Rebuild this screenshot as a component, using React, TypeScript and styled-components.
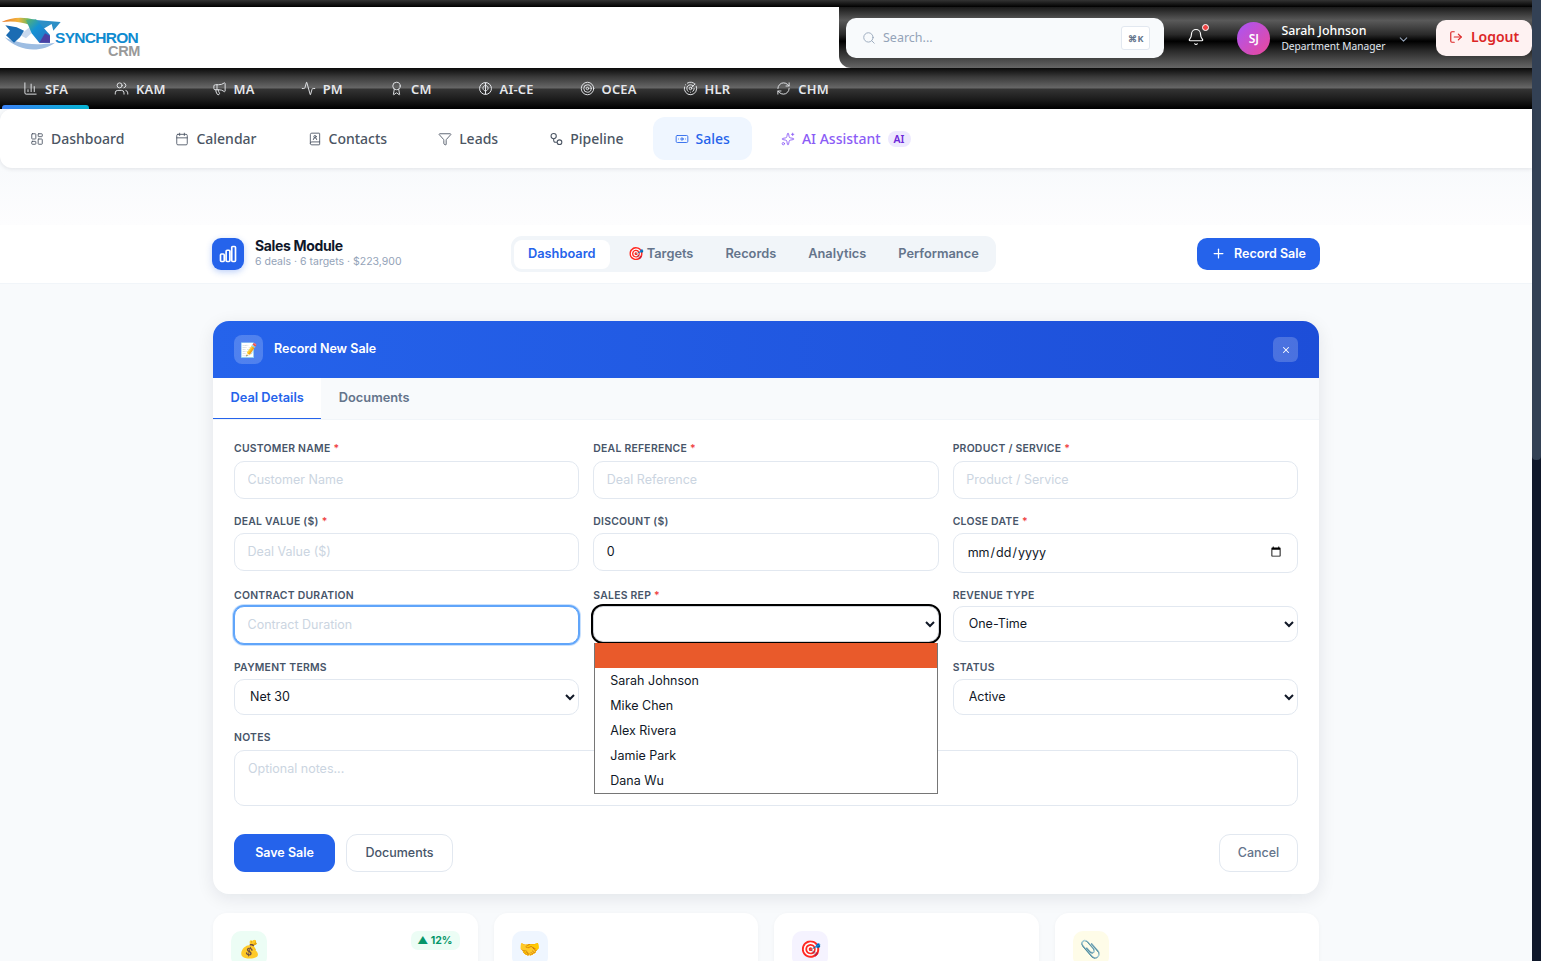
import { FC, ReactNode } from "react";
import styled, { createGlobalStyle } from "styled-components";
import {
  BarChart3,
  Users,
  Megaphone,
  Activity,
  Award,
  Target,
  Radar,
  RefreshCw,
  LayoutDashboard,
  Calendar,
  BookUser,
  Filter,
  Banknote,
  Sparkles,
  Search,
  Bell,
  ChevronDown,
  LogOut,
  Plus,
  X,
} from "lucide-react";

const GlobalStyle = createGlobalStyle`
  html, body {
    margin: 0;
    padding: 0;
    height: 100%;
    overflow: hidden;
    background: #f8fafc;
  }
  * { box-sizing: border-box; }
`;

const DARK_BAND =
  "linear-gradient(180deg, #0a0a0a 0%, #3a3a3a 22%, #666 48%, #333 52%, #1a1a1a 78%, #000 100%)";
const PANEL_BAND =
  "linear-gradient(180deg, #1a1a1a 0%, #5a5a5a 22%, #2a2a2a 45%, #000 56%, #2a2a2a 72%, #666 100%)";
const BODY_FONT = `Inter, "Liberation Sans", sans-serif`;
const NAV_FONT = `"Noto Sans", "Open Sans", sans-serif`;

const Shell = styled.div`
  display: flex;
  height: 961px;
  overflow: hidden;
`;

const Page = styled.div`
  width: 1532px;
  flex-shrink: 0;
  display: flex;
  flex-direction: column;
  font-family: ${BODY_FONT};
  & > * {
    flex-shrink: 0;
  }
`;

const ScrollTrack = styled.div`
  flex: 1;
  background: #0f172a;
`;

const ScrollThumb = styled.div`
  height: 460px;
  background: #334155;
  border-radius: 0 0 4px 4px;
`;

const TopStrip = styled.div`
  height: 7px;
  background: linear-gradient(180deg, #333 0%, #000 100%);
`;

const Header = styled.header`
  height: 61px;
  display: flex;
  justify-content: space-between;
  background: #fff;
`;

const Brand = styled.div`
  display: flex;
  position: relative;
  width: 160px;
  height: 61px;
`;

const Emblem = styled.svg`
  position: absolute;
  left: 0;
  top: 8px;
`;

const BrandName = styled.span`
  position: absolute;
  left: 55px;
  top: 22px;
  font-family: "Liberation Sans", sans-serif;
  font-weight: 700;
  font-size: 15.5px;
  line-height: 17px;
  letter-spacing: -0.7px;
  color: #0f8bd0;
`;

const BrandSub = styled.span`
  position: absolute;
  left: 108px;
  top: 37px;
  font-family: "Liberation Sans", sans-serif;
  font-weight: 700;
  font-size: 14.5px;
  line-height: 15px;
  letter-spacing: -0.3px;
  color: #999;
`;

const HeaderTools = styled.div`
  width: 693px;
  padding: 11px 0 0 7px;
  display: flex;
  align-items: flex-start;
  border-bottom-left-radius: 12px;
  background: ${PANEL_BAND};
  font-family: ${NAV_FONT};
`;

const SearchBox = styled.div`
  width: 319px;
  height: 40px;
  display: flex;
  align-items: center;
  gap: 7px;
  padding: 0 14px 0 16px;
  border-radius: 10px;
  background: #f8fafc;
  color: #94a3b8;
  font-size: 12.5px;
`;

const SearchHint = styled.span`
  flex: 1;
  margin-bottom: 1px;
`;

const Kbd = styled.span`
  width: 29px;
  height: 24px;
  display: flex;
  align-items: center;
  justify-content: center;
  border: 1px solid #e2e8f0;
  border-radius: 3px;
  background: #fff;
  color: #64748b;
  font-size: 9px;
  font-weight: 700;
`;

const BellWrap = styled.div`
  position: relative;
  margin: 10px 0 0 23px;
  width: 18px;
  height: 20px;
  color: #fff;
`;

const BellDot = styled.span`
  position: absolute;
  top: -4px;
  right: -4px;
  width: 7px;
  height: 7px;
  border-radius: 50%;
  background: #ef4444;
  border: 1px solid #fff;
`;

const Avatar = styled.div`
  margin: 4px 0 0 32px;
  width: 33px;
  height: 33px;
  border-radius: 50%;
  display: flex;
  align-items: center;
  justify-content: center;
  background: linear-gradient(135deg, #a855f7, #ec4899);
  color: #fff;
  font-size: 12px;
  font-weight: 600;
`;

const UserInfo = styled.div`
  margin: 4px 0 0 11px;
  width: 105px;
  color: #fff;
`;

const UserName = styled.div`
  font-size: 12.4px;
  font-weight: 500;
  line-height: 17px;
`;

const UserRole = styled.div`
  font-size: 10.2px;
  line-height: 15px;
  white-space: nowrap;
  color: #e2e8f0;
`;

const UserCaret = styled.div`
  margin: 11px 0 0 11px;
  color: #94a3b8;
`;

const LogoutButton = styled.button`
  margin: 2px 0 0 26px;
  width: 96px;
  height: 36px;
  padding: 0 0 3px;
  display: flex;
  align-items: center;
  justify-content: center;
  gap: 8px;
  border: none;
  border-radius: 10px;
  background: #fef2f2;
  color: #dc2626;
  font-family: ${NAV_FONT};
  font-size: 14px;
  font-weight: 600;
`;

const ModuleBar = styled.nav`
  height: 41px;
  display: flex;
  gap: 4px;
  padding-left: 2px;
  background: ${DARK_BAND};
  font-family: ${NAV_FONT};
`;

const ModuleTab = styled.div<{ $active?: boolean }>`
  position: relative;
  padding: 0 21px;
  display: flex;
  align-items: center;
  gap: 7px;
  color: #e5e7eb;
  font-size: 12.9px;
  font-weight: 600;
  letter-spacing: 0.2px;
  &::after {
    content: "";
    display: ${(p) => (p.$active ? "block" : "none")};
    position: absolute;
    left: 0;
    right: 0;
    bottom: 0;
    height: 4px;
    border-radius: 3px 3px 0 0;
    background: linear-gradient(90deg, #3b82f6, #06b6d4);
  }
`;

const SubNav = styled.nav`
  position: relative;
  z-index: 1;
  height: 59px;
  display: flex;
  align-items: center;
  gap: 7px;
  padding-left: 8px;
  border-radius: 12px 0 0 12px;
  background: #fff;
  box-shadow: 0 1px 4px rgba(15, 23, 42, 0.1);
  font-family: ${NAV_FONT};
`;

const SubTab = styled.div<{ $active?: boolean; $ai?: boolean }>`
  height: 43px;
  padding: 0 22px;
  display: flex;
  align-items: center;
  gap: 7px;
  border-radius: 12px;
  background: ${(p) => (p.$active ? "#eff6ff" : "transparent")};
  color: ${(p) => (p.$active ? "#2563eb" : p.$ai ? "#8b5cf6" : "#4b5563")};
  font-size: 14px;
  font-weight: 500;
`;

const AiBadge = styled.span`
  padding: 1px 6px;
  border-radius: 8px;
  background: #ede9fe;
  color: #6d28d9;
  font-size: 10.5px;
  font-weight: 600;
`;

const Spacer = styled.div`
  height: 57px;
  background: linear-gradient(180deg, #f8fafc, #fdfdfe);
`;

const ModuleHeader = styled.div`
  height: 59px;
  display: grid;
  grid-template-columns: 299px auto 1fr;
  align-items: center;
  padding: 0 212px;
  background: #fff;
  border-bottom: 1px solid #f1f5f9;
`;

const ModuleTitleGroup = styled.div`
  display: flex;
  align-items: center;
  gap: 11px;
`;

const ModuleIcon = styled.div`
  width: 32px;
  height: 32px;
  display: flex;
  align-items: center;
  justify-content: center;
  border-radius: 9px;
  background: #2563eb;
  color: #fff;
  box-shadow: 0 2px 6px rgba(37, 99, 235, 0.3);
`;

const ModuleTitle = styled.div`
  font-size: 14px;
  font-weight: 700;
  line-height: 13px;
  margin-bottom: 3px;
  letter-spacing: -0.35px;
  color: #0f172a;
`;

const ModuleMeta = styled.div`
  font-size: 10.5px;
  line-height: 14px;
  color: #94a3b8;
`;

const PillGroup = styled.div`
  height: 36px;
  display: flex;
  align-items: center;
  gap: 4px;
  padding: 0 3px;
  border-radius: 11px;
  background: #f1f5f9;
`;

const Pill = styled.div<{ $active?: boolean }>`
  height: 29px;
  padding: 0 14px 1px;
  display: flex;
  align-items: center;
  border-radius: 8px;
  background: ${(p) => (p.$active ? "#fff" : "transparent")};
  color: ${(p) => (p.$active ? "#2563eb" : "#64748b")};
  font-size: 12.8px;
  font-weight: 600;
  white-space: nowrap;
`;

const RecordButton = styled.button`
  justify-self: end;
  width: 123px;
  height: 32px;
  padding: 0 0 1px;
  display: flex;
  align-items: center;
  justify-content: center;
  gap: 8px;
  border: none;
  border-radius: 10px;
  background: #2563eb;
  color: #fff;
  font-family: ${BODY_FONT};
  font-size: 12.5px;
  font-weight: 600;
`;

const Main = styled.main`
  padding: 37px 213px 0;
`;

const FormCard = styled.section`
  border-radius: 16px;
  background: #fff;
  box-shadow: 0 4px 18px rgba(15, 23, 42, 0.09);
`;

const FormHeader = styled.div`
  height: 57px;
  display: flex;
  align-items: center;
  gap: 11px;
  padding: 0 21px;
  border-radius: 16px 16px 0 0;
  background: linear-gradient(90deg, #2563eb, #1d4ed8);
  color: #fff;
`;

const HeaderEmoji = styled.div`
  width: 29px;
  height: 29px;
  display: flex;
  align-items: center;
  justify-content: center;
  border-radius: 8px;
  background: rgba(255, 255, 255, 0.2);
  font-size: 14px;
`;

const FormTitle = styled.div`
  flex: 1;
  margin-bottom: 2px;
  font-size: 12.5px;
  font-weight: 600;
`;

const CloseButton = styled.div`
  width: 25px;
  height: 25px;
  display: flex;
  align-items: center;
  justify-content: center;
  border-radius: 6px;
  background: rgba(255, 255, 255, 0.2);
`;

const TabRow = styled.div`
  height: 42px;
  display: flex;
  background: #f8fafc;
  border-bottom: 1px solid #f1f5f9;
`;

const FormTab = styled.div<{ $active?: boolean }>`
  padding: 0 17.5px 2px;
  display: flex;
  align-items: center;
  background: ${(p) => (p.$active ? "#fff" : "transparent")};
  border-bottom: 1.5px solid ${(p) => (p.$active ? "#2563eb" : "transparent")};
  color: ${(p) => (p.$active ? "#2563eb" : "#64748b")};
  font-size: 12.8px;
  font-weight: 600;
`;

const FormBody = styled.div`
  position: relative;
  padding: 21px 21px 22px;
`;

const FieldGrid = styled.div`
  display: grid;
  grid-template-columns: repeat(3, 1fr);
  grid-template-rows: 72px 73px 73px 71px auto;
  column-gap: 14px;
`;

const Field = styled.div<{ $full?: boolean }>`
  position: relative;
  grid-column: ${(p) => (p.$full ? "1 / -1" : "auto")};
`;

const Label = styled.label<{ $drop?: number }>`
  display: block;
  height: 14px;
  margin-bottom: 6px;
  padding-top: ${(p) => p.$drop ?? 0}px;
  font-size: 10.4px;
  line-height: 15px;
  font-weight: 600;
  letter-spacing: 0.25px;
  color: #475569;
`;

const Req = styled.span`
  margin-left: 3px;
  color: #ef4444;
`;

const controlStyle = `
  display: block;
  width: 100%;
  border: 1px solid #e2e8f0;
  border-radius: 10px;
  background: #fff;
  color: #111827;
  font-family: ${BODY_FONT};
  font-size: 12.5px;
  outline: none;
  &::placeholder { color: #cbd5e1; opacity: 1; }
`;

const Input = styled.input<{ $focused?: boolean }>`
  ${controlStyle}
  height: 38px;
  padding: 0 12.5px 2px;
  ${(p) =>
    p.$focused
      ? "border-color: #60a5fa; box-shadow: 0 0 0 1px #60a5fa, 0 0 0 2px rgba(96,165,250,0.35);"
      : ""}
`;

const DateInput = styled.input`
  ${controlStyle}
  height: 40px;
  padding: 0 13px 2px;
`;

const Select = styled.select<{ $open?: boolean; $nudge?: boolean }>`
  ${controlStyle}
  height: 36px;
  padding: 0 11px 1px;
  margin-top: ${(p) => (p.$nudge ? "1px" : "0")};
  ${(p) => (p.$open ? "border-color: #d1d5db; outline: 2px solid #000; outline-offset: 0;" : "")}
`;

const Notes = styled.textarea`
  ${controlStyle}
  height: 56px;
  padding: 10px 13px;
  resize: none;
`;

const OptionList = styled.ul`
  position: absolute;
  z-index: 5;
  top: 57px;
  left: 1px;
  right: 1px;
  margin: 0;
  padding: 0;
  list-style: none;
  background: #fff;
  border: 1px solid #767676;
  border-top: none;
`;

const OptionItem = styled.li<{ $selected?: boolean }>`
  height: 25px;
  padding: 0 15px;
  display: flex;
  align-items: center;
  background: ${(p) => (p.$selected ? "#e95a2b" : "transparent")};
  color: #111827;
  font-size: 12.5px;
`;

const Actions = styled.div`
  display: flex;
  gap: 11px;
  margin-top: 28px;
`;

const SaveButton = styled.button`
  width: 101px;
  height: 38px;
  padding: 0 0 2px;
  border: none;
  border-radius: 11px;
  background: #2563eb;
  color: #fff;
  font-family: ${BODY_FONT};
  font-size: 12.5px;
  font-weight: 600;
`;

const GhostButton = styled.button<{ $width: number; $push?: boolean }>`
  width: ${(p) => p.$width}px;
  height: 38px;
  padding: 0 0 2px;
  margin-left: ${(p) => (p.$push ? "auto" : "0")};
  border: 1px solid #e2e8f0;
  border-radius: 11px;
  background: #fff;
  color: ${(p) => (p.$push ? "#64748b" : "#475569")};
  font-family: ${BODY_FONT};
  font-size: 12.5px;
  font-weight: 500;
`;

const StatGrid = styled.div`
  display: grid;
  grid-template-columns: repeat(4, 1fr);
  gap: 16px;
  margin-top: 19px;
`;

const StatCard = styled.div`
  height: 120px;
  display: flex;
  align-items: flex-start;
  justify-content: space-between;
  padding: 18px;
  border-radius: 14px;
  background: #fff;
  box-shadow: 0 1px 4px rgba(15, 23, 42, 0.04);
`;

const StatIcon = styled.div<{ $bg: string }>`
  width: 36px;
  height: 36px;
  display: flex;
  align-items: center;
  justify-content: center;
  border-radius: 10px;
  background: ${(p) => p.$bg};
  font-size: 17px;
`;

const Trend = styled.span`
  padding: 3px 7px 3px 6px;
  border-radius: 7px;
  background: #ecfdf5;
  color: #059669;
  font-size: 10.5px;
  font-weight: 700;
`;

const SplitCircleIcon = () => (
  <svg width="15" height="15" viewBox="0 0 24 24" fill="none" stroke="currentColor" strokeWidth="1.6">
    <circle cx="12" cy="12" r="9.5" />
    <path d="M12 2.5v19M12 7c-3 .5-4.5 3-4 5.5.3 1.7 2 3 4 3.5M12 7c3 .5 4.5 3 4 5.5-.3 1.7-2 3-4 3.5" />
  </svg>
);

const PipelineIcon = () => (
  <svg width="14" height="14" viewBox="0 0 24 24" fill="none" stroke="currentColor" strokeWidth="1.8">
    <circle cx="8" cy="7" r="4.5" />
    <circle cx="18" cy="17.5" r="4" />
    <path d="M8 11.5V14a3.5 3.5 0 0 0 3.5 3.5H14" />
  </svg>
);

const ChartBarsIcon = () => (
  <svg width="20" height="20" viewBox="0 0 24 24" fill="none" stroke="currentColor" strokeWidth="2">
    <path d="M3 13.125C3 12.504 3.504 12 4.125 12h2.25c.621 0 1.125.504 1.125 1.125v6.75C7.5 20.496 6.996 21 6.375 21h-2.25A1.125 1.125 0 0 1 3 19.875v-6.75ZM9.75 8.625c0-.621.504-1.125 1.125-1.125h2.25c.621 0 1.125.504 1.125 1.125v11.25c0 .621-.504 1.125-1.125 1.125h-2.25a1.125 1.125 0 0 1-1.125-1.125V8.625ZM16.5 4.125c0-.621.504-1.125 1.125-1.125h2.25C20.496 3 21 3.504 21 4.125v15.75c0 .621-.504 1.125-1.125 1.125h-2.25a1.125 1.125 0 0 1-1.125-1.125V4.125Z" />
  </svg>
);

const modules: { label: string; icon: ReactNode }[] = [
  { label: "SFA", icon: <BarChart3 size={15} strokeWidth={1.5} /> },
  { label: "KAM", icon: <Users size={15} strokeWidth={1.5} /> },
  { label: "MA", icon: <Megaphone size={15} strokeWidth={1.5} /> },
  { label: "PM", icon: <Activity size={15} strokeWidth={1.5} /> },
  { label: "CM", icon: <Award size={15} strokeWidth={1.5} /> },
  { label: "AI-CE", icon: <SplitCircleIcon /> },
  { label: "OCEA", icon: <Target size={15} strokeWidth={1.5} /> },
  { label: "HLR", icon: <Radar size={15} strokeWidth={1.5} /> },
  { label: "CHM", icon: <RefreshCw size={15} strokeWidth={1.5} /> },
];

const subTabs: { label: string; icon: ReactNode; active?: boolean }[] = [
  { label: "Dashboard", icon: <LayoutDashboard size={14} strokeWidth={1.5} /> },
  { label: "Calendar", icon: <Calendar size={14} strokeWidth={1.5} /> },
  { label: "Contacts", icon: <BookUser size={14} strokeWidth={1.5} /> },
  { label: "Leads", icon: <Filter size={14} strokeWidth={1.5} /> },
  { label: "Pipeline", icon: <PipelineIcon /> },
  { label: "Sales", icon: <Banknote size={14} strokeWidth={1.5} />, active: true },
];

const repOptions = ["", "Sarah Johnson", "Mike Chen", "Alex Rivera", "Jamie Park", "Dana Wu"];

const TextField: FC<{
  label: string;
  required?: boolean;
  value?: string;
  focused?: boolean;
  drop?: number;
}> = ({ label, required, value, focused, drop }) => (
  <Field>
    <Label $drop={drop}>
      {label.toUpperCase()}
      {required && <Req>*</Req>}
    </Label>
    <Input placeholder={label} defaultValue={value} $focused={focused} />
  </Field>
);

const Logo = () => (
  <Brand>
    <Emblem width="62" height="37" viewBox="0 45 186 111">
      <defs>
        <linearGradient id="arc" x1="0" x2="1" y1="0" y2="0">
          <stop offset="0" stopColor="#e8762c" />
          <stop offset="0.5" stopColor="#f2b33d" />
          <stop offset="0.8" stopColor="#6cb85e" />
          <stop offset="1" stopColor="#2aa3a8" />
        </linearGradient>
        <linearGradient id="diag" x1="0" x2="1" y1="0" y2="1">
          <stop offset="0" stopColor="#5cb56a" />
          <stop offset="0.4" stopColor="#1592d4" />
          <stop offset="1" stopColor="#2a6fc0" />
        </linearGradient>
      </defs>
      <path d="M14 112 C40 125 90 140 165 128 C130 155 60 160 14 112Z" fill="#9dbde2" />
      <path d="M5 66 C30 52 70 48 105 60 L90 75 C65 65 35 62 5 66Z" fill="url(#arc)" />
      <path d="M60 105 L100 72 L118 78 L78 115Z" fill="#c9d9ee" />
      <path d="M108 60 L182 66 L160 92 L155 72 L128 88Z" fill="#2d8fc6" />
      <path d="M78 60 L108 58 L150 105 L150 128 L118 128 L95 100Z" fill="url(#diag)" />
      <path d="M118 128 L135 100 L150 108 L150 128Z" fill="#4b3fa3" />
      <path d="M16 76 L50 82 L72 92 L60 112 L42 128 L18 106 L30 92Z" fill="#1b6cb3" />
    </Emblem>
    <BrandName>SYNCHRON</BrandName>
    <BrandSub>CRM</BrandSub>
  </Brand>
);

export default function App() {
  return (
    <>
      <GlobalStyle />
      <Shell>
        <Page>
          <TopStrip />
          <Header>
            <Logo />
            <HeaderTools>
              <SearchBox>
                <Search size={14} strokeWidth={1.5} />
                <SearchHint>Search...</SearchHint>
                <Kbd>⌘K</Kbd>
              </SearchBox>
              <BellWrap>
                <Bell size={18} strokeWidth={1.5} />
                <BellDot />
              </BellWrap>
              <Avatar>SJ</Avatar>
              <UserInfo>
                <UserName>Sarah Johnson</UserName>
                <UserRole>Department Manager</UserRole>
              </UserInfo>
              <UserCaret>
                <ChevronDown size={13} />
              </UserCaret>
              <LogoutButton>
                <LogOut size={14} />
                Logout
              </LogoutButton>
            </HeaderTools>
          </Header>
          <ModuleBar>
            {modules.map((m, i) => (
              <ModuleTab key={m.label} $active={i === 0}>
                {m.icon}
                {m.label}
              </ModuleTab>
            ))}
          </ModuleBar>
          <SubNav>
            {subTabs.map((t) => (
              <SubTab key={t.label} $active={t.active}>
                {t.icon}
                {t.label}
              </SubTab>
            ))}
            <SubTab $ai>
              <Sparkles size={14} strokeWidth={1.5} />
              AI Assistant
              <AiBadge>AI</AiBadge>
            </SubTab>
          </SubNav>
          <Spacer />
          <ModuleHeader>
            <ModuleTitleGroup>
              <ModuleIcon>
                <ChartBarsIcon />
              </ModuleIcon>
              <div>
                <ModuleTitle>Sales Module</ModuleTitle>
                <ModuleMeta>6 deals · 6 targets · $223,900</ModuleMeta>
              </div>
            </ModuleTitleGroup>
            <PillGroup>
              <Pill $active>Dashboard</Pill>
              <Pill>🎯 Targets</Pill>
              <Pill>Records</Pill>
              <Pill>Analytics</Pill>
              <Pill>Performance</Pill>
            </PillGroup>
            <RecordButton>
              <Plus size={15} />
              Record Sale
            </RecordButton>
          </ModuleHeader>
          <Main>
            <FormCard>
              <FormHeader>
                <HeaderEmoji>📝</HeaderEmoji>
                <FormTitle>Record New Sale</FormTitle>
                <CloseButton>
                  <X size={10} strokeWidth={2.5} />
                </CloseButton>
              </FormHeader>
              <TabRow>
                <FormTab $active>Deal Details</FormTab>
                <FormTab>Documents</FormTab>
              </TabRow>
              <FormBody>
                <FieldGrid>
                  <TextField label="Customer Name" required />
                  <TextField label="Deal Reference" required />
                  <TextField label="Product / Service" required />
                  <TextField label="Deal Value ($)" required drop={1} />
                  <TextField label="Discount ($)" value="0" drop={1} />
                  <Field>
                    <Label $drop={1}>
                      CLOSE DATE<Req>*</Req>
                    </Label>
                    <DateInput type="date" />
                  </Field>
                  <TextField label="Contract Duration" focused drop={2} />
                  <Field>
                    <Label $drop={2}>
                      SALES REP<Req>*</Req>
                    </Label>
                    <Select $open>
                      <option></option>
                    </Select>
                    <OptionList>
                      {repOptions.map((name, i) => (
                        <OptionItem key={name} $selected={i === 0}>
                          {name}
                        </OptionItem>
                      ))}
                    </OptionList>
                  </Field>
                  <Field>
                    <Label $drop={2}>REVENUE TYPE</Label>
                    <Select $nudge>
                      <option>One-Time</option>
                    </Select>
                  </Field>
                  <Field>
                    <Label $drop={1}>PAYMENT TERMS</Label>
                    <Select>
                      <option>Net 30</option>
                    </Select>
                  </Field>
                  <Field />
                  <Field>
                    <Label $drop={1}>STATUS</Label>
                    <Select>
                      <option>Active</option>
                    </Select>
                  </Field>
                  <Field $full>
                    <Label>NOTES</Label>
                    <Notes placeholder="Optional notes..." />
                  </Field>
                </FieldGrid>
                <Actions>
                  <SaveButton>Save Sale</SaveButton>
                  <GhostButton $width={107}>Documents</GhostButton>
                  <GhostButton $width={79} $push>
                    Cancel
                  </GhostButton>
                </Actions>
              </FormBody>
            </FormCard>
            <StatGrid>
              <StatCard>
                <StatIcon $bg="#ecfdf5">💰</StatIcon>
                <Trend>▲ 12%</Trend>
              </StatCard>
              <StatCard>
                <StatIcon $bg="#eff6ff">🤝</StatIcon>
              </StatCard>
              <StatCard>
                <StatIcon $bg="#f5f3ff">🎯</StatIcon>
              </StatCard>
              <StatCard>
                <StatIcon $bg="#fefce8">📎</StatIcon>
              </StatCard>
            </StatGrid>
          </Main>
        </Page>
        <ScrollTrack>
          <ScrollThumb />
        </ScrollTrack>
      </Shell>
    </>
  );
}
